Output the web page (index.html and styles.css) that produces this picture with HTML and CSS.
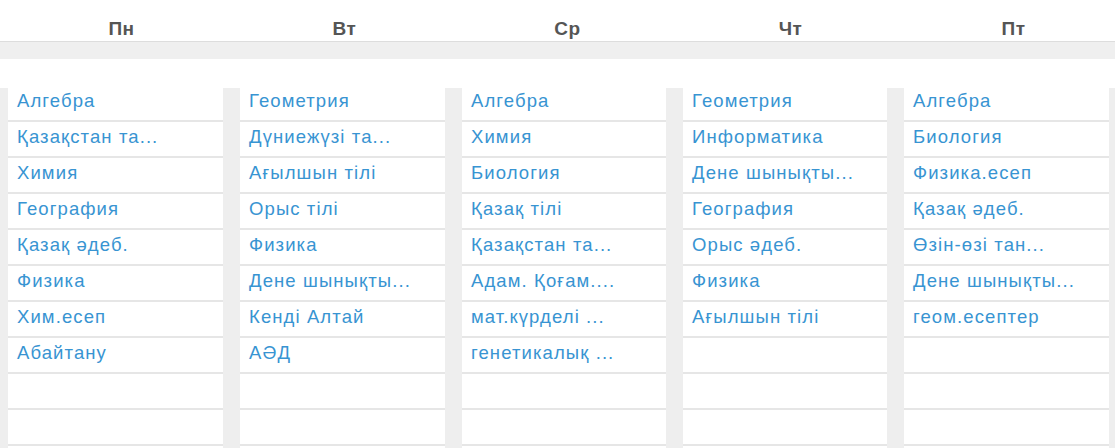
FILE: index.html
```html
<!DOCTYPE html>
<html lang="kk">
<head>
<meta charset="utf-8">
<title>Сабақ кестесі</title>
<link rel="stylesheet" href="styles.css">
</head>
<body>
<div class="page">
  <div class="days">
    <div class="day">Пн</div>
    <div class="day">Вт</div>
    <div class="day">Ср</div>
    <div class="day">Чт</div>
    <div class="day">Пт</div>
  </div>
  <div class="band"></div>
  <div class="spacer"></div>
  <div class="grid">
    <div class="col col-first">
      <div class="cell">Алгебра</div>
      <div class="cell">Қазақстан та...</div>
      <div class="cell">Химия</div>
      <div class="cell">География</div>
      <div class="cell">Қазақ әдеб.</div>
      <div class="cell">Физика</div>
      <div class="cell">Хим.есеп</div>
      <div class="cell">Абайтану</div>
      <div class="cell"></div>
      <div class="cell"></div>
    </div>
    <div class="col">
      <div class="cell">Геометрия</div>
      <div class="cell">Дүниежүзі та...</div>
      <div class="cell">Ағылшын тілі</div>
      <div class="cell">Орыс тілі</div>
      <div class="cell">Физика</div>
      <div class="cell">Дене шынықты...</div>
      <div class="cell">Кенді Алтай</div>
      <div class="cell">АӘД</div>
      <div class="cell"></div>
      <div class="cell"></div>
    </div>
    <div class="col col-narrow">
      <div class="cell">Алгебра</div>
      <div class="cell">Химия</div>
      <div class="cell">Биология</div>
      <div class="cell">Қазақ тілі</div>
      <div class="cell">Қазақстан та...</div>
      <div class="cell">Адам. Қоғам....</div>
      <div class="cell">мат.күрделі ...</div>
      <div class="cell">генетикалық ...</div>
      <div class="cell"></div>
      <div class="cell"></div>
    </div>
    <div class="col col-narrow">
      <div class="cell">Геометрия</div>
      <div class="cell">Информатика</div>
      <div class="cell">Дене шынықты...</div>
      <div class="cell">География</div>
      <div class="cell">Орыс әдеб.</div>
      <div class="cell">Физика</div>
      <div class="cell">Ағылшын тілі</div>
      <div class="cell"></div>
      <div class="cell"></div>
      <div class="cell"></div>
    </div>
    <div class="col col-last">
      <div class="cell">Алгебра</div>
      <div class="cell">Биология</div>
      <div class="cell">Физика.есеп</div>
      <div class="cell">Қазақ әдеб.</div>
      <div class="cell">Өзін-өзі тан...</div>
      <div class="cell">Дене шынықты...</div>
      <div class="cell">геом.есептер</div>
      <div class="cell"></div>
      <div class="cell"></div>
      <div class="cell"></div>
    </div>
  </div>
</div>
</body>
</html>
```

FILE: styles.css
```css
html, body {
  margin: 0;
  padding: 0;
  background: #ffffff;
}

body {
  width: 1115px;
  height: 448px;
  overflow: hidden;
  font-family: "Liberation Sans", Arial, sans-serif;
}

.page {
  width: 1115px;
}

.days {
  display: flex;
  height: 42px;
  padding-left: 10px;
  border-bottom: 1px solid #dddddd;
  box-sizing: border-box;
}

.day {
  flex: 0 0 223px;
  text-align: center;
  font-weight: bold;
  font-size: 19px;
  line-height: 20px;
  letter-spacing: 0.5px;
  padding-top: 19px;
  color: #555555;
}

.band {
  height: 17px;
  background: #efefef;
}

.spacer {
  height: 29px;
  background: #ffffff;
  border-top-right-radius: 4px;
  margin-right: 3px;
}

.grid {
  display: flex;
  gap: 17px;
  padding-left: 8px;
  padding-right: 5px;
  background: #eeeeee;
  height: 360px;
}

.col {
  flex: 0 0 205px;
  background: #ffffff;
}

.col-first {
  flex-basis: 215px;
}

.col-narrow {
  flex-basis: 204px;
}

.col-last {
  flex-basis: 205px;
}

.cell {
  box-sizing: border-box;
  height: 36px;
  border-bottom: 2px solid #e6e6e6;
  padding: 4px 9px 0;
  font-size: 18.5px;
  line-height: 22px;
  letter-spacing: 1.1px;
  color: #3894d2;
  white-space: nowrap;
  overflow: hidden;
}

.cell:first-child {
  height: 34px;
  padding-top: 2px;
}
```
